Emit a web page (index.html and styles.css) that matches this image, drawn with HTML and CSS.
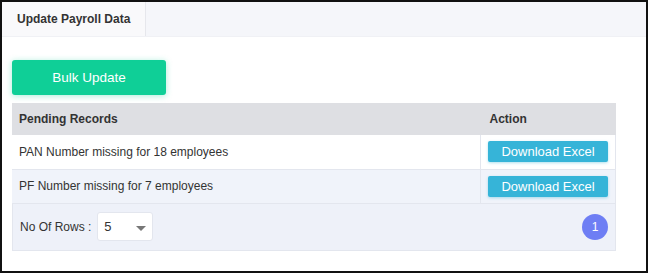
FILE: index.html
```html
<!DOCTYPE html>
<html lang="en">
<head>
  <meta charset="UTF-8" />
  <meta name="viewport" content="width=device-width, initial-scale=1.0" />
  <title>Update Payroll Data</title>
  <link rel="stylesheet" href="styles.css">
</head>
<body>
  <div class="frame">
    <div class="tabs">
      <div class="tab active">Update Payroll Data</div>
    </div>

    <div class="content">
      <button class="bulk">Bulk Update</button>

      <table class="records">
        <thead>
          <tr>
            <th>Pending Records</th>
            <th class="col-action">Action</th>
          </tr>
        </thead>
        <tbody>
          <tr>
            <td>PAN Number missing for 18 employees</td>
            <td class="col-action"><button class="excel">Download Excel</button></td>
          </tr>
          <tr class="alt">
            <td>PF Number missing for 7 employees</td>
            <td class="col-action"><button class="excel">Download Excel</button></td>
          </tr>
        </tbody>
      </table>

      <div class="pager">
        <div class="rows">
          <span>No Of Rows :</span>
          <div class="select">
            <span>5</span>
            <span class="caret"></span>
          </div>
        </div>
        <span class="page">1</span>
      </div>
    </div>
  </div>
</body>
</html>
```

FILE: styles.css
```css
* {
  box-sizing: border-box;
}
body {
  margin: 0;
  font-family: "Liberation Sans", Arial, sans-serif;
  color: #333;
  background: #fff;
}
.frame {
  width: 648px;
  height: 273px;
  border: 2px solid #111;
  background: #fff;
}
.tabs {
  display: flex;
  height: 35px;
  background: #f5f6fa;
  border-bottom: 1px solid #f0f1f5;
}
.tab {
  padding: 0 15px;
  font-size: 12px;
  font-weight: bold;
  line-height: 34px;
  color: #333;
}
.tab.active {
  background: #f9f9fb;
  border-right: 1px solid #e6e7ec;
}
.content {
  padding: 23px 28px 0 10px;
}
button {
  font-family: inherit;
  border: none;
  cursor: pointer;
  color: #fff;
}
.bulk {
  width: 154px;
  height: 35px;
  background: #0fcf97;
  border-radius: 3px;
  font-size: 13.5px;
  box-shadow: 0 1px 6px rgba(15, 207, 151, 0.35);
  margin-bottom: 8px;
}
.records {
  width: 604px;
  border-collapse: collapse;
  font-size: 12px;
}
.records th {
  text-align: left;
  height: 32px;
  padding: 0 7px;
  background: #dedfe3;
  font-weight: bold;
}
.records th.col-action {
  padding-left: 9px;
}
.records td {
  height: 34px;
  padding: 0 7px;
  background: #fff;
  border-bottom: 1px solid #e3e6ee;
}
.records tr.alt td {
  background: #f0f3fa;
}
.records .col-action {
  width: 134px;
}
.records td.col-action {
  border-left: 1px solid #e3e6ee;
  border-right: 1px solid #e3e6ee;
}
.excel {
  width: 120px;
  height: 21px;
  background: #36b4d8;
  border-radius: 2px;
  font-size: 13px;
  box-shadow: 0 1px 3px rgba(54, 180, 216, 0.4);
  padding: 0;
}
.pager {
  width: 604px;
  height: 47px;
  display: flex;
  align-items: center;
  justify-content: space-between;
  padding: 0 7px;
  background: #eef1f9;
  border: 1px solid #e3e6ee;
  border-top: none;
  font-size: 12px;
}
.rows {
  display: flex;
  align-items: center;
  gap: 6px;
}
.select {
  width: 56px;
  height: 29px;
  display: flex;
  align-items: center;
  justify-content: space-between;
  padding: 0 6px;
  background: #fff;
  border: 1px solid #e3e6ee;
  border-radius: 3px;
  font-size: 13px;
}
.caret {
  width: 0;
  height: 0;
  margin-top: 3px;
  border-left: 5px solid transparent;
  border-right: 5px solid transparent;
  border-top: 5px solid #777;
}
.page {
  width: 26px;
  height: 26px;
  border-radius: 50%;
  background: #6e7ef4;
  color: #fff;
  font-size: 12px;
  display: flex;
  align-items: center;
  justify-content: center;
}
```
